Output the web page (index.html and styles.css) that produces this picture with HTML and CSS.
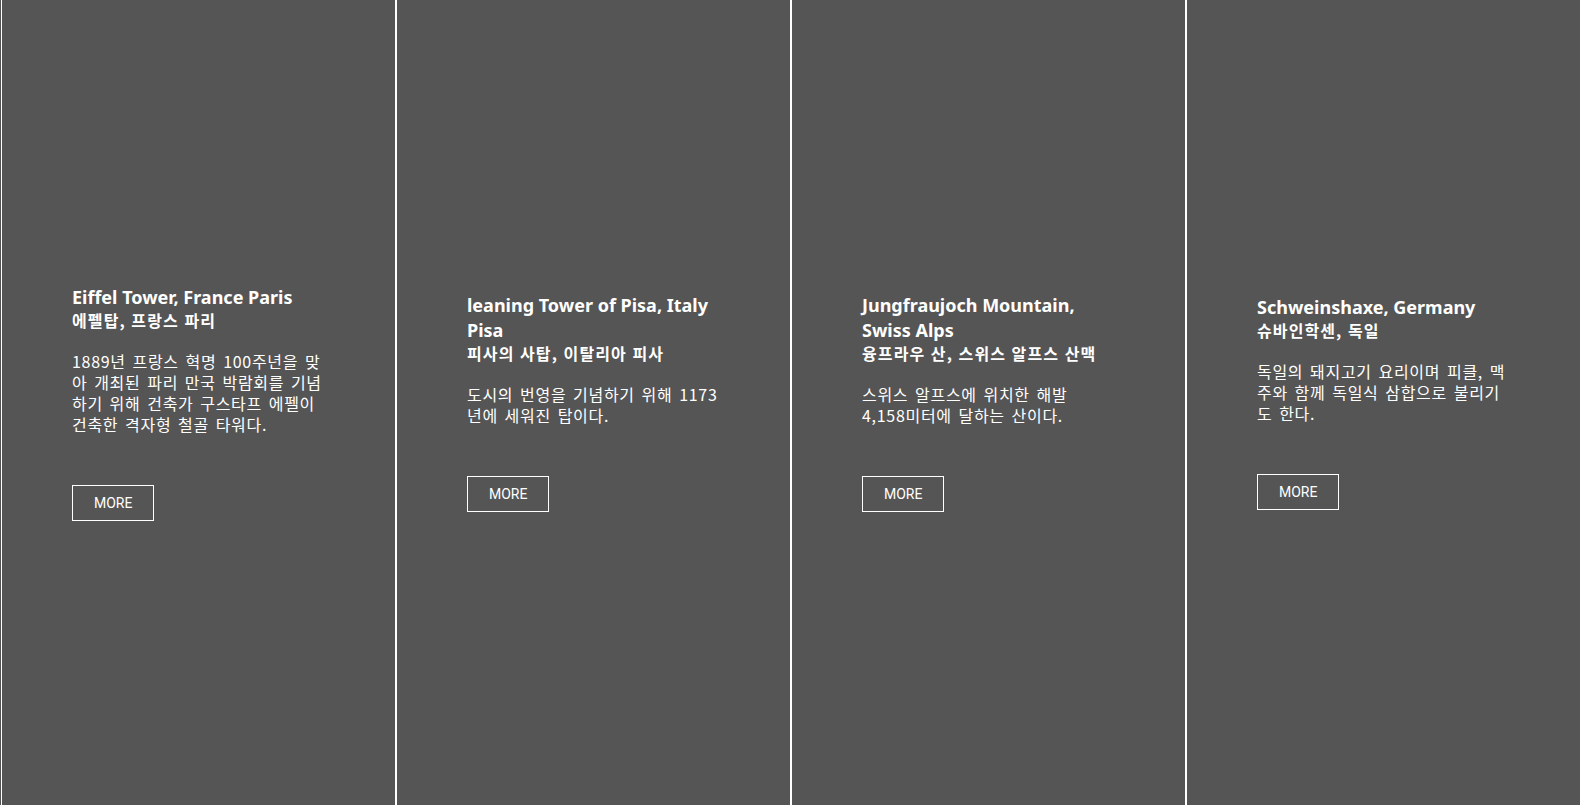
FILE: index.html
```html
<!DOCTYPE html>
<html lang="ko">
<head>
<meta charset="utf-8">
<title>Travel</title>
<link rel="stylesheet" href="styles.css">
</head>
<body>
<main class="columns">
  <section class="column">
    <h2 class="title">Eiffel Tower, France Paris</h2>
    <h3 class="subtitle">에펠탑, 프랑스 파리</h3>
    <p class="desc">1889년 프랑스 혁명 100주년을 맞아 개최된 파리 만국 박람회를 기념하기 위해 건축가 구스타프 에펠이 건축한 격자형 철골 타워다.</p>
    <a class="more" href="#">MORE</a>
  </section>
  <section class="column">
    <h2 class="title">leaning Tower of Pisa, Italy Pisa</h2>
    <h3 class="subtitle">피사의 사탑, 이탈리아 피사</h3>
    <p class="desc">도시의 번영을 기념하기 위해 1173년에 세워진 탑이다.</p>
    <a class="more" href="#">MORE</a>
  </section>
  <section class="column">
    <h2 class="title">Jungfraujoch Mountain, Swiss Alps</h2>
    <h3 class="subtitle">융프라우 산, 스위스 알프스 산맥</h3>
    <p class="desc">스위스 알프스에 위치한 해발 4,158미터에 달하는 산이다.</p>
    <a class="more" href="#">MORE</a>
  </section>
  <section class="column">
    <h2 class="title">Schweinshaxe, Germany</h2>
    <h3 class="subtitle">슈바인학센, 독일</h3>
    <p class="desc">독일의 돼지고기 요리이며 피클, 맥주와 함께 독일식 삼합으로 불리기도 한다.</p>
    <a class="more" href="#">MORE</a>
  </section>
</main>
</body>
</html>
```

FILE: styles.css
```css
html, body {
  margin: 0;
  padding: 0;
  background: #555555;
}

body {
  font-family: "Noto Sans CJK KR", "Noto Sans", sans-serif;
  color: #ffffff;
}

.columns {
  display: flex;
  height: 100vh;
  padding-left: 1px;
  box-sizing: border-box;
}

.column {
  flex: 1 1 0;
  box-sizing: border-box;
  border: 1px solid #ffffff;
  border-top: 0;
  border-bottom: 0;
  background: #555555;
  padding: 0 70px;
  display: flex;
  flex-direction: column;
  justify-content: center;
}

.title {
  margin: 0;
  font-family: "Noto Sans", "Noto Sans CJK KR", sans-serif;
  font-size: 18px;
  line-height: 25px;
  font-weight: 700;
}

.subtitle {
  margin: 0;
  font-size: 16px;
  line-height: 21px;
  letter-spacing: 1.1px;
  font-weight: 700;
}

.desc {
  margin: 20px 0 0;
  font-size: 16px;
  line-height: 21px;
  letter-spacing: 0.7px;
  word-spacing: 1.6px;
  font-weight: 400;
}

.more {
  align-self: flex-start;
  margin-top: 50px;
  box-sizing: border-box;
  height: 36px;
  padding: 0 21px;
  border: 1px solid #ffffff;
  display: inline-flex;
  align-items: center;
  font-family: Roboto, "Liberation Sans", sans-serif;
  font-size: 14px;
  color: #ffffff;
  text-decoration: none;
}
```
